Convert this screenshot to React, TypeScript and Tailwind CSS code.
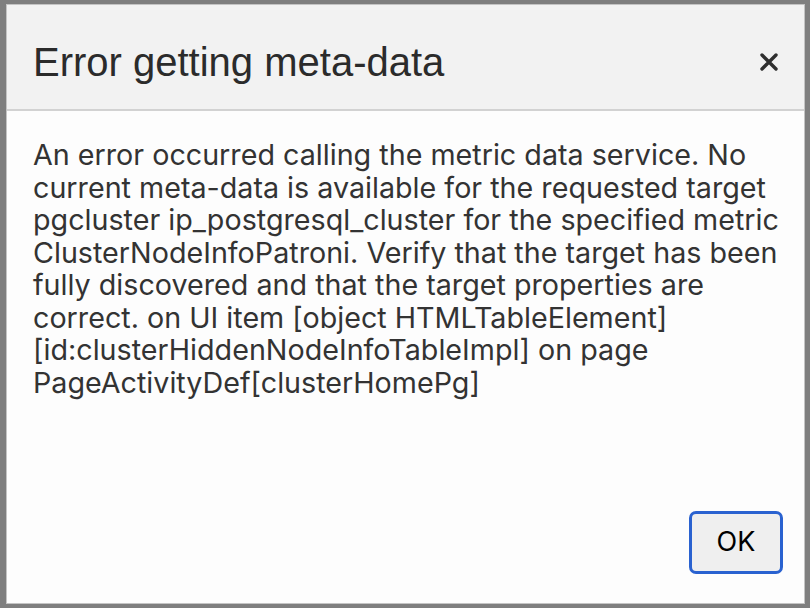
// lines are broken the same way the dialog wraps them
const MESSAGE = [
  "An error occurred calling the metric data service. No",
  "current meta-data is available for the requested target",
  "pgcluster ip_postgresql_cluster for the specified metric",
  "ClusterNodeInfoPatroni. Verify that the target has been",
  "fully discovered and that the target properties are",
  "correct. on UI item [object HTMLTableElement]",
  "[id:clusterHiddenNodeInfoTableImpl] on page",
  "PageActivityDef[clusterHomePg]",
];

function CloseIcon() {
  return (
    <svg width="18" height="18" viewBox="0 0 18 18" className="block">
      <path d="M2 2 L16 16 M16 2 L2 16" stroke="currentColor" strokeWidth="3.4" strokeLinecap="round" />
    </svg>
  );
}

export default function App() {
  return (
    <div className="w-[810px] h-[608px] bg-[#7f7f7f] pt-[4px] pl-[6px] pr-[5px] pb-[4px] font-['Inter',sans-serif]">
      <div className="h-full flex flex-col border border-[#c4c4c4] bg-[#fdfdfd]">
        {/* header */}
        <div className="h-[106px] shrink-0 bg-[#f2f2f2] border-b-2 border-[#d2d2d2] pl-[26px] pr-[26px] pt-[37px] flex items-start justify-between">
          <h1 className="text-[40px] leading-[40px] text-[#2b2b2b] font-['Liberation_Sans',sans-serif]">
            Error getting meta-data
          </h1>
          <button className="mt-[11px] text-[#2f2f2f]">
            <CloseIcon />
          </button>
        </div>

        {/* body */}
        <div className="flex-1 flex flex-col pl-[26px] pr-[21px] pt-[28px] pb-[29px]">
          <p className="text-[28.7px] leading-[32.5px] text-[#333333] whitespace-nowrap">
            {MESSAGE.map((line, i) => (
              <span key={i} className="block">
                {line}
              </span>
            ))}
          </p>
          <div className="flex-1" />
          <div className="flex justify-end">
            <button className="w-[94px] h-[63px] rounded-[7px] border-[3px] border-[#2a62d0] bg-[#efefef] text-[27px] text-black">
              OK
            </button>
          </div>
        </div>
      </div>
    </div>
  );
}
